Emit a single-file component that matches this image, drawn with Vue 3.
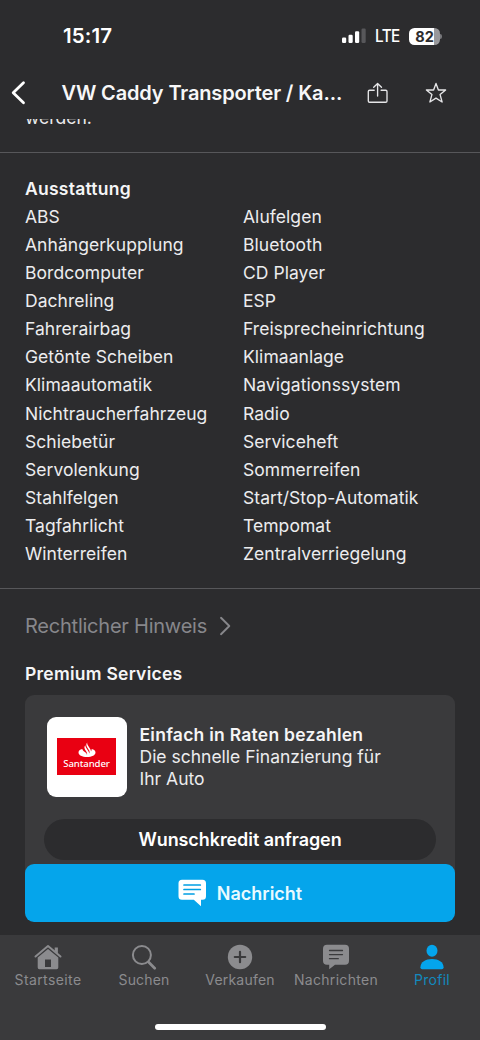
<script setup>
const equipment = [
  ['ABS', 'Alufelgen'],
  ['Anhängerkupplung', 'Bluetooth'],
  ['Bordcomputer', 'CD Player'],
  ['Dachreling', 'ESP'],
  ['Fahrerairbag', 'Freisprecheinrichtung'],
  ['Getönte Scheiben', 'Klimaanlage'],
  ['Klimaautomatik', 'Navigationssystem'],
  ['Nichtraucherfahrzeug', 'Radio'],
  ['Schiebetür', 'Serviceheft'],
  ['Servolenkung', 'Sommerreifen'],
  ['Stahlfelgen', 'Start/Stop-Automatik'],
  ['Tagfahrlicht', 'Tempomat'],
  ['Winterreifen', 'Zentralverriegelung'],
]
</script>

<template>
  <div class="screen">
    <header class="status">
      <span class="time">15:17</span>
      <div class="indicators">
        <svg class="signal" width="24" height="16" viewBox="0 0 24 16">
          <rect x="0" y="9.5" width="4.2" height="5.5" rx="1.2" fill="#fff" />
          <rect x="6.5" y="6.7" width="4.2" height="8.3" rx="1.2" fill="#fff" />
          <rect x="13" y="3.3" width="4.2" height="11.7" rx="1.2" fill="#fff" />
          <rect x="19.5" y="0.5" width="4.2" height="14.5" rx="1.2" fill="#57575a" />
        </svg>
        <span class="lte">LTE</span>
        <div class="battery"><span>82</span></div>
        <i class="battery-tip"></i>
      </div>
    </header>

    <nav class="nav">
      <svg class="back" width="16" height="26" viewBox="0 0 16 26">
        <path d="M13.500 2.800 3.200 12.800 13.500 22.800" fill="none" stroke="#fff" stroke-width="2.8" stroke-linecap="round" stroke-linejoin="round" />
      </svg>
      <h1>VW Caddy Transporter / Ka...</h1>
      <svg class="share" width="22" height="22" viewBox="0 0 22 22" fill="none" stroke="#e6e6e8" stroke-width="1.35" stroke-linecap="round" stroke-linejoin="round">
        <path d="M7.2 8.2H2.600Q1.3 8.2 1.3 9.500V18.900Q1.3 20.2 2.600 20.2H18.700Q20 20.2 20 18.900V9.500Q20 8.2 18.700 8.2H14.1" />
        <path d="M10.6 14V1.5M6.7 5.3 10.6 1.4l3.9 3.9" />
      </svg>
      <svg class="star" width="22" height="22" viewBox="0 0 22 22" fill="none" stroke="#e6e6e8" stroke-width="1.35" stroke-linejoin="round">
        <path d="M11 1.500 13.400 8h7.200l-5.500 4.600 2 7.400-6.100-3.900L4.900 20l2-7.400L1.400 8h7.200Z" />
      </svg>
    </nav>

    <main class="content">
      <section class="description"><p>werden.</p></section>
      <section class="equipment">
        <h2>Ausstattung</h2>
        <div v-for="row in equipment" :key="row[0]" class="row">
          <span>{{ row[0] }}</span><span>{{ row[1] }}</span>
        </div>
      </section>
      <div class="legal">
        <span>Rechtlicher Hinweis</span>
        <svg width="13" height="20" viewBox="0 0 13 20"><path d="M2 1.8 10.3 10 2 18.2" fill="none" stroke="#87878b" stroke-width="1.9" stroke-linecap="round" stroke-linejoin="round" /></svg>
      </div>
      <h2 class="services">Premium Services</h2>
      <article class="card">
        <div class="offer">
          <div class="logo">
            <div class="brand">
              <svg width="18" height="16" viewBox="0 0 18 16">
                <path fill="#fff" d="M4.3 7.1C1.9 7.7.5 8.8.5 10.4.5 13.1 4.2 15 9 15s8.5-1.9 8.5-4.6c0-1.6-1.5-2.8-3.8-3.4 0 1-.2 1.8-.7 2.5 0-1-.3-1.8-.8-2.6L9.700 3.1C9.200 2.300 9.100 1.400 9.200.5 8.100 1.900 8.100 3.400 9 4.900l2 3.300c.7 1.200.7 2.200.2 3.300-.1-.8-.4-1.500-.8-2.200L8 5.500C7.500 4.700 7.300 4 7.300 3.300 6.200 4.600 6.200 6 7 7.400l1.700 2.900c.5.900.6 1.700.3 2.600-.2-.7-.5-1.200-.8-1.800L5.500 8.900C4.800 8.300 4.400 7.700 4.300 7.100Z" />
              </svg>
              <span>Santander</span>
            </div>
          </div>
          <div class="copy">
            <strong>Einfach in Raten bezahlen</strong>
            <p>Die schnelle Finanzierung für<br />Ihr Auto</p>
          </div>
        </div>
        <button class="credit">Wunschkredit anfragen</button>
      </article>
    </main>

    <div class="action">
      <button class="message">
        <svg width="29" height="28" viewBox="0 0 29 28">
          <path fill="#fff" d="M4 .8H24.500Q28 .8 28 4.300V17.200Q28 20.700 24.500 20.700H23V27.200L15.800 20.700H4Q.5 20.700.5 17.200V4.300Q.5.8 4 .8Z" />
          <path d="M6 6H22.300M6 10.500H22.300M6 15H16" stroke="#009fe3" stroke-width="1.7" stroke-linecap="round" />
        </svg>
        <span>Nachricht</span>
      </button>
    </div>

    <footer class="tabs">
      <div class="tab">
        <svg width="28" height="26" viewBox="0 0 28 26" fill="#8b8b8e">
          <path d="M1.5 12.500 14 2l12.500 10.500" fill="none" stroke="#8b8b8e" stroke-width="2" stroke-linecap="round" stroke-linejoin="round" />
          <path d="M20.700 3.600h3.200v6l-3.200-2.700Z" />
          <path fill-rule="evenodd" d="M14 5 24.300 13.500V23.500Q24.300 25.200 22.600 25.200H5.400Q3.700 25.200 3.700 23.500V13.500ZM11 15.600V23H17V15.600Z" />
        </svg>
        <span class="start">Startseite</span>
      </div>
      <div class="tab">
        <svg width="28" height="26" viewBox="0 0 28 26" fill="none" stroke="#8b8b8e">
          <circle cx="11.900" cy="11" r="9" stroke-width="2" />
          <path d="m18.500 18 6.200 6.200" stroke-width="2.700" stroke-linecap="round" />
        </svg>
        <span class="search">Suchen</span>
      </div>
      <div class="tab">
        <svg width="28" height="26" viewBox="0 0 28 26">
          <circle cx="14" cy="13" r="12.200" fill="#8b8b8e" />
          <path d="M14 7.800v10.400M8.800 13h10.400" stroke="#3a3a3c" stroke-width="2.200" stroke-linecap="round" />
        </svg>
        <span class="sell">Verkaufen</span>
      </div>
      <div class="tab">
        <svg width="28" height="26" viewBox="0 0 28 26">
          <path fill="#8b8b8e" d="M5 .8H23Q27 .8 27 4.800V16.800Q27 20.800 23 20.800H13L7.200 25.300V20.800H5Q1 20.800 1 16.800V4.800Q1 .8 5 .8Z" />
          <path d="M7.500 6.500H20.500M7.500 10.600H20.500M7.500 14.700H16.300" stroke="#3a3a3c" stroke-width="1.300" stroke-linecap="round" />
        </svg>
        <span class="inbox">Nachrichten</span>
      </div>
      <div class="tab active">
        <svg width="28" height="26" viewBox="0 0 28 26" fill="#04a5ed">
          <ellipse cx="14" cy="6.700" rx="5.500" ry="6" />
          <path d="M2.400 23.300C2.600 18.200 7.400 15.100 14 15.100S25.400 18.200 25.600 23.300Q25.600 25.300 23.800 25.300H4.200Q2.400 25.300 2.400 23.300Z" />
        </svg>
        <span class="profile">Profil</span>
      </div>
      <i class="home"></i>
    </footer>
  </div>
</template>

<style>
body { background: #2c2c2e; }
</style>

<style scoped>
* { box-sizing: border-box; margin: 0; padding: 0; }
.screen {
  width: 480px; height: 1040px; display: flex; flex-direction: column;
  overflow: hidden; background: #2c2c2e; color: #ececee;
  font-family: Inter, "Liberation Sans", sans-serif; white-space: nowrap;
}
svg { display: block; flex: none; }
.status { height: 72px; flex: none; display: flex; justify-content: space-between; align-items: center; padding: 0 38px 0 63px; color: #fff; }
.time { font-size: 20.500px; font-weight: 600; letter-spacing: 0.1px; margin-top: -1px; }
.indicators { display: flex; align-items: center; }
.lte { font-size: 17px; font-weight: 500; letter-spacing: -0.6px; margin-left: 9px; width: 25px; transform: scaleX(0.9); transform-origin: left; }
.battery {
  width: 31px; height: 17px; margin-left: 9px; border-radius: 5.500px; color: #2c2c2e;
  background: linear-gradient(90deg, #fff 82%, #98989b 82%);
  display: flex; align-items: center; justify-content: center; font-size: 14.500px; font-weight: 700;
}
.battery-tip { width: 2px; height: 5px; border-radius: 0 2px 2px 0; background: #77777a; }
.nav { height: 47px; flex: none; display: flex; align-items: center; padding: 0 33px 6px 9.500px; }
.nav h1 { margin-left: 36px; width: 305.500px; font-size: 20px; font-weight: 600; letter-spacing: -0.14px; color: #f7f7f8; }
.star { margin-left: 36px; }
.content { height: 774px; flex: none; overflow: hidden; }
.description { height: 34px; display: flex; align-items: flex-start; border-bottom: 1px solid #57575a; padding-left: 25px; }
.description p { font-size: 17.500px; line-height: 28px; margin-top: -15px; height: 28px; }
.equipment { height: 436px; border-bottom: 1px solid #57575a; padding: 22px 25px 0; }
h2 { font-size: 17.500px; line-height: 28px; font-weight: 600; letter-spacing: 0.25px; color: #f5f5f6; }
.row { display: grid; grid-template-columns: 218px 1fr; font-size: 17.500px; line-height: 28.080px; letter-spacing: 0.05px; }
.legal { display: flex; align-items: center; gap: 12px; padding: 0 25px; height: 74px; font-size: 20px; letter-spacing: -0.23px; color: #87878b; }
.services { padding-left: 25px; margin-top: -3px; }
.card { margin: 7px 25px 0; height: 220px; border-radius: 9px; background: #3a3a3c; padding: 22px 19px 0; }
.offer { display: flex; height: 102px; padding-left: 3px; }
.logo { width: 80px; height: 80px; flex: none; border-radius: 9px; background: #fff; display: grid; place-items: center; }
.brand { width: 59px; height: 37px; margin: -1px 1px 0 0; background: #e90012; display: flex; flex-direction: column; align-items: center; padding-top: 4px; color: #fff; }
.brand span { font-family: "Noto Sans", sans-serif; font-weight: 500; font-size: 9.600px; line-height: 12px; letter-spacing: -0.1px; }
.copy { margin-left: 12.500px; padding-top: 7px; line-height: 22px; font-size: 17.500px; }
.copy strong { display: block; font-weight: 600; letter-spacing: 0.25px; color: #f5f5f6; }
button { border: 0; font-family: inherit; }
.credit { display: block; width: 392px; height: 41px; border-radius: 21px; background: #2c2c2e; color: #fff; font-size: 18px; font-weight: 600; letter-spacing: -0.08px; }
.action { position: relative; margin-top: -29px; height: 71px; flex: none; padding: 0 25px; }
.message { width: 430px; height: 58px; border-radius: 9px; background: #05a5eb; color: #e9faff; display: flex; align-items: center; justify-content: center; gap: 10px; font-size: 18px; font-weight: 600; }
.tabs { flex: 1; display: flex; flex-wrap: wrap; align-content: flex-start; background: #3a3a3c; padding-top: 9px; }
.tab { width: 96px; height: 80px; display: flex; flex-direction: column; align-items: center; color: #8b8b8e; font-size: 14px; line-height: 20px; }
.start { letter-spacing: 0.4px; }
.search { letter-spacing: 0.15px; }
.sell { letter-spacing: 0.2px; }
.inbox { letter-spacing: 0.3px; }
.profile { letter-spacing: 0.25px; }
.active { color: #1289bf; }
.home { width: 171px; height: 6px; margin: 0 auto; border-radius: 3px; background: #fff; }
</style>
